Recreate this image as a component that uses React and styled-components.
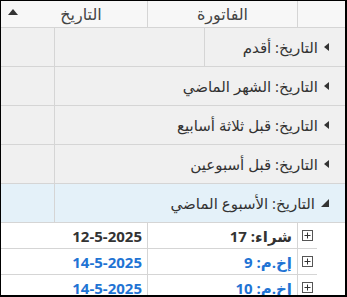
import React from 'react';
import styled, { createGlobalStyle } from 'styled-components';

const GlobalStyle = createGlobalStyle`
  html, body {
    margin: 0;
    padding: 0;
    background: #ffffff;
  }
  * {
    box-sizing: border-box;
  }
`;

const border = '#d5d5d5';
const text = '#333333';
const link = '#1f74d4';

const Frame = styled.div`
  width: 347px;
  height: 297px;
  overflow: hidden;
  direction: rtl;
  border-style: solid;
  border-color: #000;
  border-width: 1px 2px 2px 1px;
  font-family: "Open Sans", "DejaVu Sans", sans-serif;
  color: ${text};
  display: flex;
  flex-direction: column;
`;

const HeaderRow = styled.div`
  display: flex;
  height: 27px;
  flex-shrink: 0;
  background: #f7f7f7;
  border-bottom: 1px solid ${border};
`;

const HeaderCell = styled.div`
  width: ${p => p.$w}px;
  flex-shrink: 0;
  display: flex;
  align-items: center;
  justify-content: center;
  position: relative;
  padding-left: ${p => (p.$sorted ? 14 : 0)}px;
  font-size: 16px;
  color: #444;
  border-left: ${p => (p.$last ? 'none' : `1px solid ${border}`)};
`;

const SortIcon = styled.svg`
  position: absolute;
  left: 7px;
  top: 8px;
`;

const GroupRow = styled.div`
  display: flex;
  height: 39px;
  flex-shrink: 0;
  background: ${p => (p.$active ? '#e4f1f9' : '#f0f0f0')};
  border-bottom: 1px solid ${border};
`;

const GroupLabel = styled.div`
  flex: 1;
  display: flex;
  align-items: center;
  gap: 6px;
  padding-right: 16px;
  font-size: 15px;
  color: ${text};
  border-left: 1px solid ${border};
  white-space: nowrap;
`;

const GroupMid = styled.div`
  width: 150px;
  flex-shrink: 0;
  border-left: 1px solid ${border};
`;

const GroupTail = styled.div`
  width: 53px;
  flex-shrink: 0;
`;

const DataRow = styled.div`
  display: flex;
  height: 26px;
  flex-shrink: 0;
`;

const Indent = styled.div`
  width: 28px;
  flex-shrink: 0;
`;

const Cell = styled.div`
  width: ${p => p.$w}px;
  flex-shrink: 0;
  display: flex;
  align-items: center;
  justify-content: ${p => (p.$center ? 'center' : 'flex-start')};
  padding-right: ${p => (p.$center ? 0 : 5)}px;
  border-bottom: 1px solid ${border};
  border-left: ${p => (p.$last ? 'none' : `1px solid ${border}`)};
  font-size: 15px;
  font-weight: 700;
  color: ${p => (p.$blue ? link : text)};
  white-space: nowrap;
`;

const Collapsed = () => (
  <svg width="5" height="8" viewBox="0 0 5 8">
    <path d="M5 0 L0 4 L5 8 Z" fill={text} />
  </svg>
);

const Expanded = () => (
  <svg width="8" height="8" viewBox="0 0 8 8">
    <path d="M8 0 L8 8 L0 8 Z" fill={text} />
  </svg>
);

const PlusBox = () => (
  <svg width="11" height="11" viewBox="0 0 11 11">
    <rect x="0.5" y="0.5" width="10" height="10" fill="#fff" stroke="#555" />
    <path d="M2.5 5.5 H8.5 M5.5 2.5 V8.5" stroke="#333" strokeWidth="1" />
  </svg>
);

const groups = [
  { label: 'التاريخ: أقدم', split: true },
  { label: 'التاريخ: الشهر الماضي' },
  { label: 'التاريخ: قبل ثلاثة أسابيع' },
  { label: 'التاريخ: قبل أسبوعين' },
  { label: 'التاريخ: الأسبوع الماضي', active: true },
];

const rows = [
  { invoice: 'شراء: 17', date: '12-5-2025' },
  { invoice: 'إخ.م: 9', date: '14-5-2025', blue: true },
  { invoice: 'إخ.م: 10', date: '14-5-2025', blue: true },
];

export default function App() {
  return (
    <Frame>
      <GlobalStyle />
      <HeaderRow>
        <HeaderCell $w={48} />
        <HeaderCell $w={150}>الفاتورة</HeaderCell>
        <HeaderCell $w={146} $sorted $last>
          التاريخ
          <SortIcon width="10" height="6" viewBox="0 0 10 6">
            <path d="M0 6 L5 0 L10 6 Z" fill={text} />
          </SortIcon>
        </HeaderCell>
      </HeaderRow>

      {groups.map(g => (
        <GroupRow key={g.label} $active={g.active}>
          <GroupLabel>
            {g.active ? <Expanded /> : <Collapsed />}
            <span>{g.label}</span>
          </GroupLabel>
          {g.split && <GroupMid />}
          <GroupTail />
        </GroupRow>
      ))}

      {rows.map((r, i) => (
        <DataRow key={i}>
          <Indent />
          <Cell $w={20} $center>
            <PlusBox />
          </Cell>
          <Cell $w={150} $blue={r.blue}>{r.invoice}</Cell>
          <Cell $w={146} $blue={r.blue} $last>{r.date}</Cell>
        </DataRow>
      ))}
    </Frame>
  );
}
